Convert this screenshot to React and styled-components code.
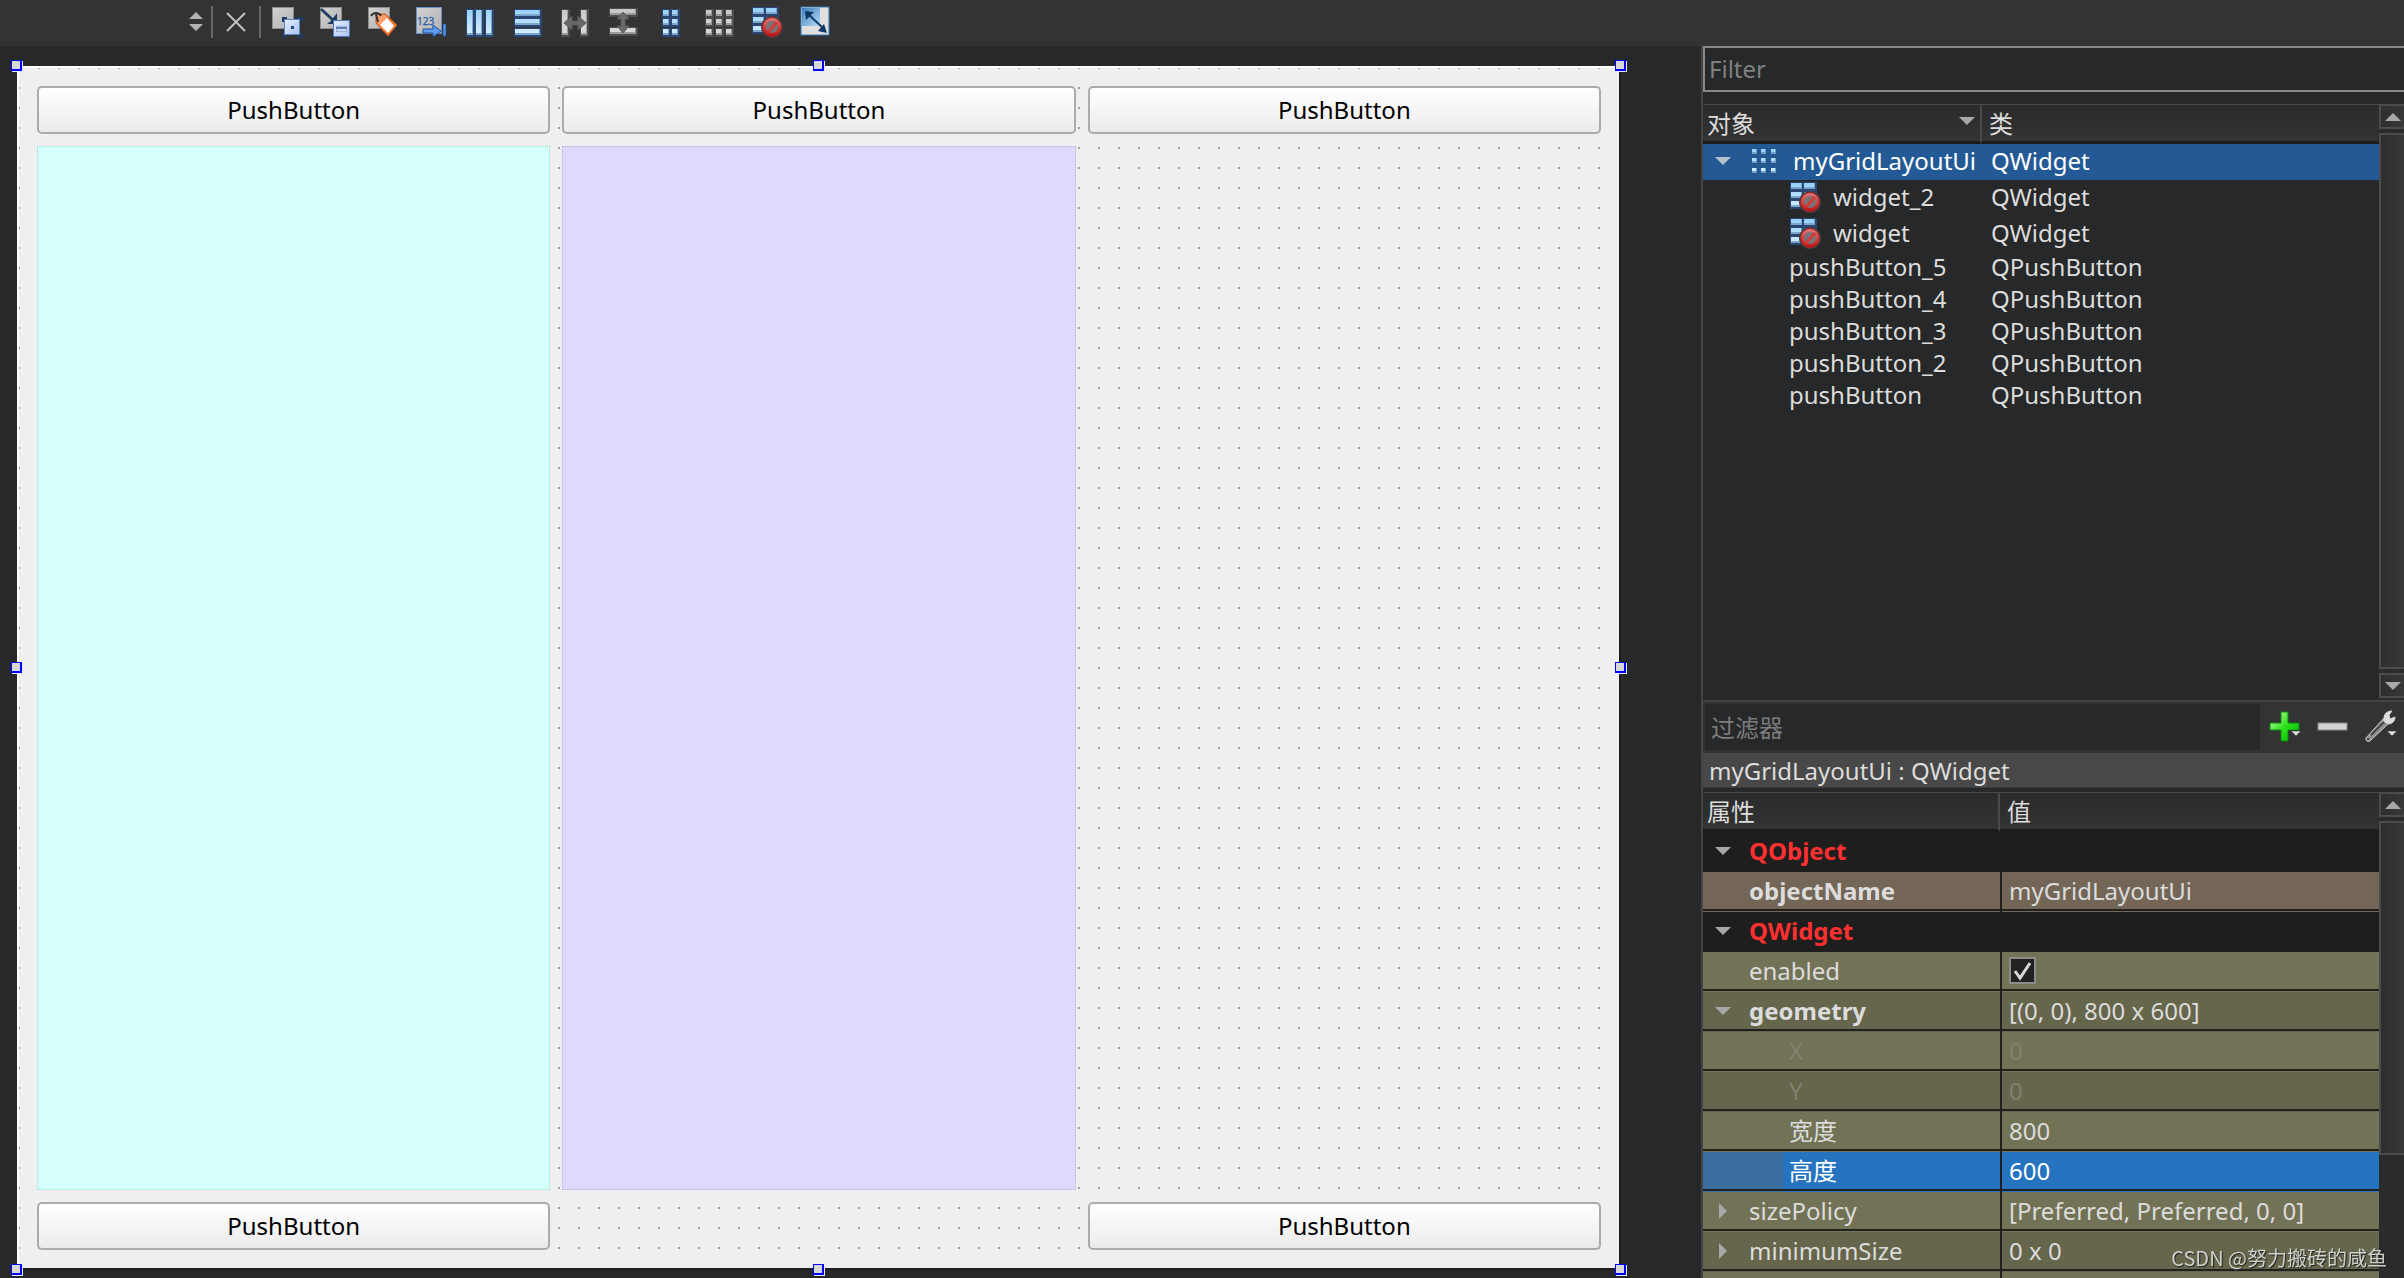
import React from "react";
import styled, { createGlobalStyle, css } from "styled-components";

const objects = [
  { name: "myGridLayoutUi", type: "QWidget", icon: "grid", root: true },
  { name: "widget_2", type: "QWidget", icon: "broken" },
  { name: "widget", type: "QWidget", icon: "broken" },
  { name: "pushButton_5", type: "QPushButton" },
  { name: "pushButton_4", type: "QPushButton" },
  { name: "pushButton_3", type: "QPushButton" },
  { name: "pushButton_2", type: "QPushButton" },
  { name: "pushButton", type: "QPushButton" },
];

const properties = [
  { name: "QObject", group: true },
  { name: "objectName", value: "myGridLayoutUi", tone: "brown", bold: true },
  { name: "QWidget", group: true },
  { name: "enabled", checked: true, tone: "olive" },
  { name: "geometry", value: "[(0, 0), 800 x 600]", tone: "oliveDark", bold: true, arrow: "down" },
  { name: "X", value: "0", tone: "olive", child: true, disabled: true },
  { name: "Y", value: "0", tone: "oliveDark", child: true, disabled: true },
  { name: "宽度", value: "800", tone: "olive", child: true },
  { name: "高度", value: "600", tone: "selected", child: true },
  { name: "sizePolicy", value: "[Preferred, Preferred, 0, 0]", tone: "olive", arrow: "right" },
  { name: "minimumSize", value: "0 x 0", tone: "oliveDark", arrow: "right" },
  { name: "", value: "", tone: "olive" },
];

const tones = {
  brown: "#736656",
  olive: "#727356",
  oliveDark: "#65664b",
  selected: "#2673c0",
};

const handles = ["nw", "n", "ne", "w", "e", "sw", "s", "se"];

const Bars = ({ rects, fill }) =>
  rects.map(([x, y, w, h]) => (
    <g key={`${x}-${y}`}>
      <rect x={x - 1} y={y - 1} width={w + 3} height={h + 3} fill={fill === "blue" ? "#2b4672" : "#4c4c4c"} />
      <rect x={x} y={y} width={w} height={h} fill={fill === "blue" ? "#7ba6cc" : "#9a9a9a"} />
      <rect x={x} y={y} width={w - 1} height={h - 2} fill={`url(#${fill})`} />
    </g>
  ));

const cells = (xs, ys, w, h) => xs.flatMap((x) => ys.map((y) => [x, y, w, h]));

const GreySheet = () => (
  <rect x="1.5" y="1.5" width="21" height="21" fill="url(#sheet)" stroke="#8d8d8d" />
);

const icons = {
  widgets: (
    <>
      <GreySheet />
      <path d="M12 16v-4h4M26 12h5v4M12 27v4h4M26 31h5v-4" fill="none" stroke="#1f3a66" strokeWidth="2" />
      <rect x="13.5" y="13.5" width="15" height="15" fill="url(#pale)" stroke="#5b84c4" />
      <rect x="20" y="20" width="3" height="3" fill="#1f4a86" />
    </>
  ),
  signals: (
    <>
      <GreySheet />
      <path d="M2 3l13 12" stroke="#243f63" strokeWidth="3" />
      <path d="M18 18H8l4-3 3-4 3-4z" fill="#1f3a60" />
      <rect x="14.5" y="14.5" width="16" height="16" fill="url(#pale)" stroke="#4d78b8" />
      <rect x="17.5" y="20.5" width="10" height="5" fill="#c9d9f6" stroke="#9bb2da" />
      <path d="M17 22h11" stroke="#5f7cae" strokeWidth="2" />
    </>
  ),
  buddies: (
    <>
      <GreySheet />
      <path d="M9 8h9l12 11-9 11L9 17z" fill="#f07c33" stroke="#c9551a" />
      <path d="M10 9h8l3 3-8 7-3-3z" fill="#f9a06b" />
      <path d="M20 12l7 8-6 7-8-8z" fill="#fff" />
      <path d="M4 10c2-4 8-4 10 0M9 8l2 8" fill="none" stroke="#343434" strokeWidth="2" />
    </>
  ),
  tabOrder: (
    <>
      <rect x="1.5" y="1.5" width="25" height="26" fill="url(#sheet)" stroke="#6a8fc4" />
      <text x="2" y="19" fontSize="10" fill="#2a5fa8" stroke="#2a5fa8" strokeWidth="0.3">123</text>
      <path d="M8 23h10v-4l8 6-8 6v-4H8z" fill="#5d9cf0" stroke="#1f4f94" />
      <rect x="28" y="18" width="3" height="12" fill="#4d8ee0" stroke="#1f4f94" strokeWidth="0.5" />
    </>
  ),
  horizontal: <Bars fill="blue" rects={cells([4, 13, 23], [4], 6, 25)} />,
  vertical: <Bars fill="blue" rects={cells([4], [4, 13, 23], 25, 6)} />,
  splitH: (
    <>
      <Bars fill="grey" rects={cells([3, 22], [4], 6, 25)} />
      <path d="M5 17l8-7v5h6v-5l8 7-8 7v-5h-6v5z" fill="#6a6a6a" stroke="#5a5a5a" />
    </>
  ),
  splitV: (
    <>
      <Bars fill="grey" rects={cells([3], [3, 22], 26, 6)} />
      <path d="M16 6l6 7h-4v7h4l-6 7-6-7h4v-7h-4z" fill="#6a6a6a" stroke="#5a5a5a" />
    </>
  ),
  form: <Bars fill="blue" rects={cells([8, 17], [4, 13, 23], 6, 6)} />,
  gridGrey: <Bars fill="grey" rects={cells([3, 13, 23], [4, 13, 23], 6, 6)} />,
  grid: cells([3, 12, 22], [4, 13, 23], 5, 5).map(([x, y, w, h]) => (
    <g key={`${x}-${y}`}>
      <rect x={x + 1} y={y + 1} width={w + 1} height={h + 1} fill="#2b5486" />
      <rect x={x} y={y} width={w} height={h} fill="#6fa0cf" />
      <rect x={x} y={y} width={w - 1} height={h - 2} fill="url(#blue)" />
    </g>
  )),
  broken: (
    <>
      <Bars fill="blue" rects={cells([2, 15], [2, 11, 20], 11, 6)} />
      <circle cx="21" cy="21" r="11" fill="#474042" />
      <circle cx="21" cy="21" r="9.5" fill="url(#red)" stroke="#a52020" />
      <circle cx="21" cy="21" r="6" fill="#77757a" />
      <path d="M17 26l9-10" stroke="#d43a3a" strokeWidth="3" />
    </>
  ),
  adjust: (
    <>
      <rect x="2" y="1" width="28" height="28" fill="#e0e0e0" stroke="#2f78b8" />
      <rect x="3" y="2" width="18" height="18" fill="url(#sky)" />
      <path d="M9 8l15 14" stroke="#123d6b" strokeWidth="2" />
      <path d="M6 5l9 1-8 8zM28 27l-9-2 6-7z" fill="#0f3766" />
    </>
  ),
};

const toolbarIcons = [
  ["widgets", "Edit Widgets"],
  ["signals", "Edit Signals/Slots"],
  ["buddies", "Edit Buddies"],
  ["tabOrder", "Edit Tab Order"],
  ["horizontal", "Lay Out Horizontally"],
  ["vertical", "Lay Out Vertically"],
  ["splitH", "Lay Out Horizontally in Splitter"],
  ["splitV", "Lay Out Vertically in Splitter"],
  ["form", "Lay Out in a Form Layout"],
  ["gridGrey", "Lay Out in a Grid"],
  ["broken", "Break Layout"],
  ["adjust", "Adjust Size"],
];

const Icon = ({ name }) => (
  <svg width="32" height="32" viewBox="0 0 32 32" aria-hidden="true">
    {icons[name]}
  </svg>
);

const Gradients = () => (
  <GradientDefs aria-hidden="true">
    <defs>
      <linearGradient id="blue" x1="0" y1="0" x2="0" y2="32" gradientUnits="userSpaceOnUse">
        <stop offset="0" stopColor="#8fcdf8" />
        <stop offset="1" stopColor="#e2f3ff" />
      </linearGradient>
      <linearGradient id="grey" x1="0" y1="0" x2="0" y2="32" gradientUnits="userSpaceOnUse">
        <stop offset="0" stopColor="#c4c4c4" />
        <stop offset="1" stopColor="#dedede" />
      </linearGradient>
      <linearGradient id="sheet" x1="0" y1="0" x2="1" y2="1">
        <stop offset="0" stopColor="#d2d2d2" />
        <stop offset="1" stopColor="#b2b2b2" />
      </linearGradient>
      <linearGradient id="pale" x1="0" y1="0" x2="1" y2="1">
        <stop offset="0" stopColor="#e4edfd" />
        <stop offset="1" stopColor="#a9c3f2" />
      </linearGradient>
      <linearGradient id="sky" x1="0" y1="0" x2="1" y2="1">
        <stop offset="0" stopColor="#3f7fc0" />
        <stop offset="1" stopColor="#b7dcf4" />
      </linearGradient>
      <linearGradient id="red" x1="0" y1="0" x2="0" y2="1">
        <stop offset="0" stopColor="#e07a7a" />
        <stop offset="1" stopColor="#c01010" />
      </linearGradient>
      <linearGradient id="green" x1="0" y1="0" x2="1" y2="1">
        <stop offset="0" stopColor="#d6ffc4" />
        <stop offset="0.5" stopColor="#2fe01c" />
        <stop offset="1" stopColor="#00b800" />
      </linearGradient>
    </defs>
  </GradientDefs>
);

const Triangle = ({ dir = "down" }) => (
  <StyledTriangle viewBox="0 0 16 8" $dir={dir} aria-hidden="true">
    <path d="M0 0h16L8 8z" fill="currentColor" />
  </StyledTriangle>
);

const Toolbar = () => (
  <StyledToolbar>
    <Stepper aria-label="Open forms">
      <svg width="14" height="20" viewBox="0 0 14 20">
        <path d="M0 7l7-7 7 7zM0 12h14l-7 7z" fill="#b4b4b4" />
      </svg>
    </Stepper>
    <Divider />
    <CloseButton aria-label="Close form">
      <svg width="20" height="20" viewBox="0 0 20 20">
        <path d="M1 1l18 18M19 1L1 19" stroke="#c0c0c0" strokeWidth="2" />
      </svg>
    </CloseButton>
    <Divider />
    <ToolGroup>
      {toolbarIcons.map(([icon, label]) => (
        <ToolButton key={icon} aria-label={label}>
          <Icon name={icon} />
        </ToolButton>
      ))}
    </ToolGroup>
  </StyledToolbar>
);

const Canvas = () => (
  <StyledCanvas>
    <Form>
      <PushButton>PushButton</PushButton>
      <PushButton>PushButton</PushButton>
      <PushButton>PushButton</PushButton>
      <ColorWidget $color="#d4fffa" $edge="#9bdcd6" />
      <ColorWidget $color="#e1d8ff" $edge="#b9aee0" />
      <span />
      <PushButton>PushButton</PushButton>
      <span />
      <PushButton>PushButton</PushButton>
      {handles.map((h) => (
        <Handle key={h} $at={h} />
      ))}
    </Form>
  </StyledCanvas>
);

const ScrollBar = ({ full }) => (
  <StyledScrollBar>
    <ScrollButton aria-label="Scroll up">
      <Triangle dir="up" />
    </ScrollButton>
    <ScrollThumb $full={full} />
    {full && (
      <ScrollButton aria-label="Scroll down">
        <Triangle />
      </ScrollButton>
    )}
  </StyledScrollBar>
);

const ObjectInspector = () => (
  <Inspector>
    <FilterInput placeholder="Filter" aria-label="Filter" />
    <Scrollable>
      <Table>
        <colgroup>
          <Col $width={279} />
          <col />
        </colgroup>
        <thead>
          <tr>
            <Th>
              <HeaderLabel>
                对象
                <Triangle />
              </HeaderLabel>
            </Th>
            <Th>类</Th>
          </tr>
        </thead>
        <tbody>
          {objects.map((o) => (
            <ObjectRow key={o.name} $selected={o.root} $tall={!!o.icon}>
              <td>
                <ObjectName $root={o.root}>
                  {o.root && <Triangle />}
                  {o.icon && <Icon name={o.icon} />}
                  {o.name}
                </ObjectName>
              </td>
              <td>{o.type}</td>
            </ObjectRow>
          ))}
        </tbody>
      </Table>
      <ScrollBar full />
    </Scrollable>
  </Inspector>
);

const PropertyEditor = () => (
  <Editor>
    <EditorTools>
      <EditorFilter placeholder="过滤器" aria-label="过滤器" />
      <EditorButton aria-label="Add">
        <svg width="36" height="36" viewBox="0 0 36 36">
          <path d="M15 3h7v11h11v7H22v11h-7V21H4v-7h11z" fill="url(#green)" stroke="#0a8a0a" />
          <path d="M25 22h10l-5 5z" fill="#d8d8d8" stroke="#333" strokeWidth="0.5" />
        </svg>
      </EditorButton>
      <EditorButton aria-label="Remove">
        <svg width="36" height="36" viewBox="0 0 36 36">
          <rect x="4" y="14" width="29" height="7" fill="url(#grey)" stroke="#8a8a8a" />
        </svg>
      </EditorButton>
      <EditorButton aria-label="Configure">
        <svg width="36" height="36" viewBox="0 0 36 36">
          <path
            d="M22 9c0-4 3-7 8-7l-3 4 1 4 5-2c0 4-3 7-7 7L9 31c-2 3-6 1-5-2z"
            fill="#8f8f8f"
            stroke="#c8c8c8"
          />
          <path d="M22 9c0-4 3-7 8-7l-3 4 1 4 5-2c0 4-3 7-7 7l-2-1-3-2z" fill="#dedede" />
          <path d="M9 26L22 13" stroke="#444" strokeWidth="2" />
          <circle cx="6" cy="30" r="1" fill="#333" />
          <path d="M25 22h10l-5 5z" fill="#d8d8d8" stroke="#333" strokeWidth="0.5" />
        </svg>
      </EditorButton>
    </EditorTools>
    <EditorTitle>myGridLayoutUi : QWidget</EditorTitle>
    <Scrollable>
      <Table>
        <colgroup>
          <Col $width={297} />
          <col />
        </colgroup>
        <thead>
          <tr>
            <Th>属性</Th>
            <Th>值</Th>
          </tr>
        </thead>
        <tbody>
          {properties.map((p) =>
            p.group ? (
              <GroupRow key={p.name}>
                <td colSpan={2}>
                  <PropertyName>
                    <Triangle />
                    {p.name}
                  </PropertyName>
                </td>
              </GroupRow>
            ) : (
              <PropertyRow key={p.name} $tone={p.tone} $disabled={p.disabled}>
                <td>
                  <PropertyName $bold={p.bold} $child={p.child}>
                    {p.arrow && <Triangle dir={p.arrow} />}
                    {p.name}
                  </PropertyName>
                </td>
                <td>
                  {p.checked ? (
                    <CheckLabel>
                      <input type="checkbox" defaultChecked aria-label={p.name} />
                      <svg width="27" height="27" viewBox="0 0 27 27">
                        <path d="M6 14l5 7 10-15" fill="none" stroke="#d8d8d8" strokeWidth="3" />
                      </svg>
                    </CheckLabel>
                  ) : (
                    p.value
                  )}
                </td>
              </PropertyRow>
            )
          )}
        </tbody>
      </Table>
      <ScrollBar />
    </Scrollable>
  </Editor>
);

const App = () => (
  <Page>
    <GlobalStyle />
    <Gradients />
    <Toolbar />
    <Main>
      <Canvas />
      <Sidebar>
        <ObjectInspector />
        <PropertyEditor />
      </Sidebar>
    </Main>
    <Watermark>CSDN @努力搬砖的咸鱼</Watermark>
  </Page>
);

export default App;

const GlobalStyle = createGlobalStyle`
  * {
    box-sizing: border-box;
  }
  body {
    margin: 0;
    overflow: hidden;
    background: #262829;
  }
  body, button, input {
    font-family: "Noto Sans", "Noto Sans CJK SC", sans-serif;
    font-size: 24px;
    line-height: 32px;
  }
  button {
    padding: 0;
    border: 0;
    background: none;
  }
  svg {
    display: block;
    flex: none;
  }
`;

const Page = styled.div`
  display: flex;
  flex-direction: column;
  height: 100vh;
  color: #dcdcdc;
`;
const GradientDefs = styled.svg`
  position: absolute;
  width: 0;
  height: 0;
`;
const StyledTriangle = styled.svg`
  width: 16px;
  height: 8px;
  color: #a8a8a8;
  ${({ $dir }) => $dir === "up" && "transform: rotate(180deg);"}
  ${({ $dir }) => $dir === "right" && "transform: rotate(-90deg);"}
`;

const StyledToolbar = styled.header`
  display: flex;
  align-items: center;
  flex: none;
  height: 46px;
  padding: 0 0 2px 180px;
  background: #333;
`;
const Stepper = styled.button`
  display: flex;
  justify-content: center;
  width: 31px;
`;
const CloseButton = styled.button`
  display: flex;
  justify-content: center;
  width: 46px;
`;
const Divider = styled.div`
  width: 2px;
  height: 32px;
  background: #666;
`;
const ToolGroup = styled.div`
  display: flex;
  gap: 16px;
  padding-left: 10px;
`;
const ToolButton = styled.button`
  width: 32px;
  height: 32px;
`;

const Main = styled.main`
  display: flex;
  flex: 1;
  min-height: 0;
`;
const StyledCanvas = styled.section`
  display: flex;
  flex: 1;
  padding: 20px 82px 10px 17px;
`;
const Form = styled.div`
  position: relative;
  flex: 1;
  display: grid;
  grid-template-columns: repeat(3, 1fr);
  grid-template-rows: 48px 1fr 48px;
  gap: 12px;
  padding: 18px 16px 16px 18px;
  border: 2px solid #efefef;
  border-top-color: #fff;
  border-left-color: #fff;
  background: #efefef conic-gradient(from 90deg at 18px 18px, #a0a0a0 90deg, transparent 0) -19px -19px / 20px 20px;
  background-clip: padding-box;
  box-shadow: 2px 2px 0 #1c1e20;
`;
const PushButton = styled.button`
  border: 2px solid #ababab;
  border-radius: 5px;
  background: linear-gradient(#fff, #ebebeb);
  color: #000;
`;
const ColorWidget = styled.div`
  border: 1px dotted ${({ $edge }) => $edge};
  background: ${({ $color }) => $color};
`;
const Handle = styled.i`
  position: absolute;
  width: 11px;
  height: 11px;
  border: solid #00f;
  border-width: 1px 2px 2px 1px;
  background: #d8d8d8;
  box-shadow: 1px 1px 0 #e8e8ff;
  ${({ $at }) => ($at.includes("n") ? "top: -8px;" : $at.includes("s") ? "bottom: -9px;" : "top: calc(50% - 5px);")}
  ${({ $at }) => ($at.includes("w") ? "left: -8px;" : $at.includes("e") ? "right: -9px;" : "left: calc(50% - 5px);")}
`;

const Sidebar = styled.aside`
  flex: none;
  display: grid;
  grid-template-rows: 654fr 578fr;
  width: 703px;
  min-height: 0;
  border-left: 2px solid #444;
`;
const Inspector = styled.section`
  display: flex;
  flex-direction: column;
  gap: 12px;
  min-height: 0;
`;
const FilterInput = styled.input`
  flex: none;
  width: 100%;
  height: 46px;
  padding: 0 4px 2px;
  border: 2px solid #888;
  border-right: 0;
  border-radius: 0;
  background: #262829;
  color: #dcdcdc;
  &::placeholder {
    color: #808080;
  }
`;
const Scrollable = styled.div`
  display: flex;
  flex: 1;
  align-items: flex-start;
  min-height: 0;
  overflow: hidden;
`;
const Table = styled.table`
  flex: 1;
  min-width: 0;
  table-layout: fixed;
  border-collapse: separate;
  border-spacing: 0;
  white-space: nowrap;
  td {
    padding: 0;
  }
`;
const Col = styled.col`
  width: ${({ $width }) => $width}px;
`;
const Th = styled.th`
  height: 40px;
  padding: 2px 4px 0;
  border-top: 1px solid #484848;
  border-bottom: 3px solid #1c1c1c;
  background: linear-gradient(#2b2b2b, #333);
  font-weight: normal;
  text-align: left;
  &:first-child {
    border-right: 2px solid #4a4a4a;
  }
  & + & {
    padding-left: 7px;
  }
`;
const HeaderLabel = styled.div`
  display: flex;
  justify-content: space-between;
  align-items: center;
  padding-right: 1px;
  ${StyledTriangle} {
    margin-bottom: 6px;
  }
`;

const ObjectRow = styled.tr`
  height: ${({ $tall }) => ($tall ? 36 : 32)}px;
  line-height: 30px;
  ${({ $selected }) =>
    $selected &&
    css`
      background: #235a96;
      color: #fff;
    `}
  td {
    padding-top: ${({ $tall }) => ($tall ? 1 : 0)}px;
    vertical-align: top;
  }
  td + td {
    padding-left: 9px;
    padding-top: ${({ $tall }) => ($tall ? 2 : 0)}px;
  }
`;
const ObjectName = styled.div`
  display: flex;
  align-items: center;
  padding-left: ${({ $root }) => ($root ? 12 : 86)}px;
  svg {
    margin-right: 12px;
  }
  ${StyledTriangle} {
    margin-right: 18px;
    color: #b4c0cc;
  }
`;

const StyledScrollBar = styled.div`
  display: flex;
  flex-direction: column;
  align-self: stretch;
  gap: 4px;
  width: 25px;
  padding-bottom: 2px;
  background: #2b2b2b;
`;
const scrollPart = css`
  flex: none;
  border: 2px solid #4c4c4c;
  border-right: 0;
  background: linear-gradient(90deg, #2e2e2e, #383838);
`;
const ScrollButton = styled.button`
  ${scrollPart}
  display: flex;
  align-items: center;
  padding-left: 4px;
  height: 25px;
`;
const ScrollThumb = styled.div`
  ${scrollPart}
  flex: ${({ $full }) => ($full ? "1" : "0 0 69%")};
`;

const Editor = styled.section`
  display: flex;
  flex-direction: column;
  min-height: 0;
  border-top: 2px solid #444;
`;
const EditorTools = styled.div`
  display: flex;
  flex: none;
  padding: 2px 0 3px 2px;
  background: #333;
`;
const EditorFilter = styled.input`
  flex: 1;
  min-width: 0;
  height: 46px;
  padding: 0 6px;
  border: 0;
  background: #262829;
  color: #dcdcdc;
  &::placeholder {
    color: #7c7c7c;
  }
`;
const EditorButton = styled.button`
  display: flex;
  align-items: center;
  justify-content: center;
  width: 48px;
`;
const EditorTitle = styled.div`
  flex: none;
  height: 35px;
  margin-bottom: 4px;
  padding: 2px 0 0 6px;
  background: #484848;
  border-bottom: 1px solid #3a3a3a;
`;

const GroupRow = styled.tr`
  height: 40px;
  background: #1e1e1e;
  color: #ff3030;
  font-weight: bold;
  td {
    padding-bottom: 2px;
  }
`;
const PropertyRow = styled.tr`
  height: 40px;
  color: ${({ $tone }) => ($tone === "selected" ? "#fff" : "#dcdcdc")};
  ${({ $disabled }) => $disabled && "color: #828270;"}
  td {
    padding-bottom: 3px;
    background: linear-gradient(transparent 37px, #202020 37px 39px, transparent 39px) ${({ $tone }) => tones[$tone]};
  }
  td:first-child {
    ${({ $tone }) =>
      $tone === "selected" &&
      css`
        background:
          linear-gradient(transparent 37px, #202020 37px 39px, transparent 39px),
          linear-gradient(90deg, #3b6fa0 80px, ${tones.selected} 80px);
      `}
  }
  td + td {
    padding-left: 7px;
    border-left: 2px solid #202020;
  }
`;
const PropertyName = styled.div`
  display: flex;
  align-items: center;
  padding-left: ${({ $child }) => ($child ? 86 : 46)}px;
  font-weight: ${({ $bold }) => ($bold ? "bold" : "inherit")};
  ${StyledTriangle} {
    margin-left: -34px;
    margin-right: 18px;
  }
`;
const CheckLabel = styled.label`
  display: grid;
  width: 27px;
  input,
  svg {
    grid-area: 1 / 1;
  }
  input {
    appearance: none;
    width: 27px;
    height: 27px;
    margin: 0;
    border: 2px solid #8c8c8c;
    background: #222;
  }
  svg {
    z-index: 1;
    pointer-events: none;
  }
`;
const Watermark = styled.div`
  position: fixed;
  right: 17px;
  bottom: 4px;
  color: #d0d0ca;
  font-family: "Noto Sans CJK SC", sans-serif;
  font-size: 20px;
  text-shadow: 1px 1px 1px #222;
`;
